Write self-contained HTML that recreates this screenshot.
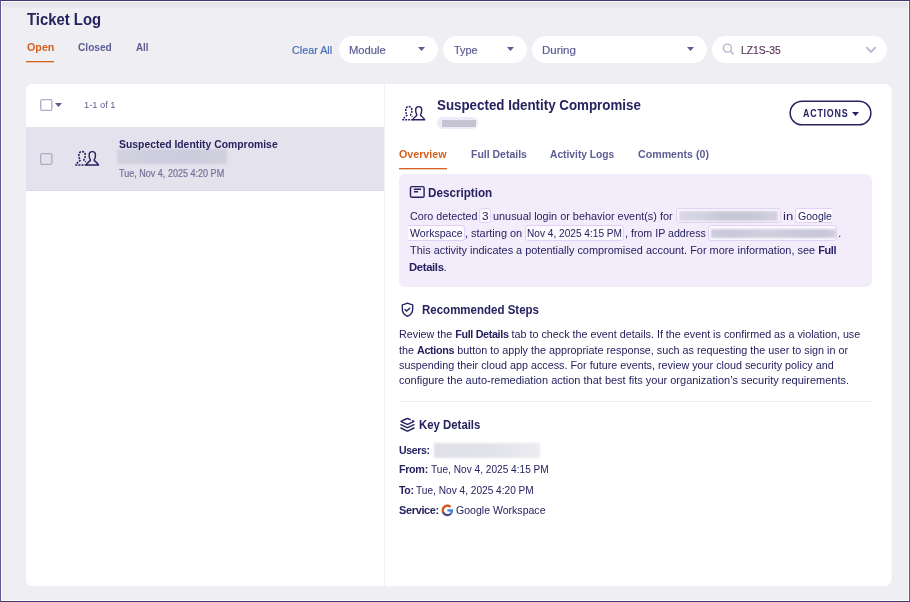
<!DOCTYPE html>
<html lang="en">
<head>
<meta charset="utf-8">
<title>Ticket Log</title>
<style>
html,body{margin:0;padding:0}
body{width:910px;height:602px;position:relative;overflow:hidden;background:#eeeef3;font-family:"Liberation Sans",sans-serif;}
.abs,.t,svg{position:absolute}
.t{white-space:nowrap;display:block;transform-origin:0 50%}
.t b{font-weight:700;letter-spacing:-0.35px}
.frame{left:0;top:0;width:908px;height:600px;border:1px solid;border-color:#3e3973 #5d5991;box-shadow:inset 0 0 0 1px #fdfdff;z-index:50}
.topband{left:2px;top:2px;width:906px;height:7px;background:linear-gradient(#e3e3e9,#e6e6ec 60%,#eeeef3)}
.panel{left:26px;top:84px;width:865px;height:502px;background:#fff;border-radius:6px}
.vdiv{left:384px;top:84px;width:1px;height:502px;background:#f1f1f7}
.row{left:26px;top:127px;width:358px;height:64px;background:#e4e2ec;border-bottom:1px solid #d9d8e6;box-sizing:border-box}
.pill{top:36px;height:27px;border-radius:13.5px;background:#fff}
.uline{height:2px;background:linear-gradient(#d5601f 50%,rgba(213,96,31,.32) 50%)}
.desc{left:399px;top:174px;width:473px;height:113px;border-radius:6px;background:#f3ecfb}
.chip{height:13.5px;background:#fcfaff;border:1px solid #e1d2f5;border-radius:3px}
.hdash{left:399px;top:401px;width:473px;height:1px;background:repeating-linear-gradient(90deg,#e8e8ef 0 2px,#f8f8fb 2px 3px)}
.blur{filter:blur(0.8px)}
</style>
</head>
<body>
<div class="abs topband"></div>
<div class="abs panel"></div>
<div class="abs" style="left:891px;top:87px;width:1px;height:496px;background:rgba(255,255,255,.5)"></div>
<div class="abs row"></div>
<div class="abs vdiv"></div>

<!-- tabs underline -->
<div class="abs uline" style="left:26px;top:61px;width:28px"></div>

<!-- filter pills -->
<div class="abs pill" style="left:338.5px;width:99.5px"></div>
<div class="abs pill" style="left:443px;width:84px"></div>
<div class="abs pill" style="left:532px;width:175px"></div>
<div class="abs pill" style="left:712px;width:175px"></div>
<!-- carets -->
<svg style="left:418px;top:47px" width="7" height="4" viewBox="0 0 7 4"><path d="M0 0h7L3.5 4z" fill="#5d5c93"/></svg>
<svg style="left:506.6px;top:47px" width="7" height="4" viewBox="0 0 7 4"><path d="M0 0h7L3.5 4z" fill="#5d5c93"/></svg>
<svg style="left:687px;top:47px" width="7" height="4" viewBox="0 0 7 4"><path d="M0 0h7L3.5 4z" fill="#5d5c93"/></svg>
<!-- search icon -->
<svg style="left:722px;top:43px" width="14" height="14" viewBox="0 0 14 14"><circle cx="5.400" cy="5.150" r="4" fill="none" stroke="#b7b3cf" stroke-width="1.35"/><path d="M8.400 8.150L11.300 11" stroke="#b7b3cf" stroke-width="1.5" stroke-linecap="round"/></svg>
<!-- chevron -->
<svg style="left:865px;top:46px" width="12" height="8" viewBox="0 0 12 8"><path d="M1.300 1.200l4.700 4.700 4.700-4.700" fill="none" stroke="#b9b6cf" stroke-width="1.8" stroke-linecap="butt" stroke-linejoin="miter"/></svg>

<!-- list header -->
<svg style="left:39.3px;top:97.9px" width="15" height="15" viewBox="0 0 15 15"><rect x="1.65" y="1.65" width="11.2" height="10.800" rx="1.600" fill="none" stroke="#aeacc9" stroke-width="1.3"/></svg>
<svg style="left:55px;top:103px" width="7" height="4" viewBox="0 0 7 4"><path d="M0 0h7L3.500 4z" fill="#5d5c93"/></svg>
<!-- row -->
<svg style="left:39.3px;top:151.5px" width="15" height="15" viewBox="0 0 15 15"><rect x="1.65" y="1.65" width="11.2" height="10.800" rx="1.600" fill="none" stroke="#aeacc9" stroke-width="1.3"/></svg>
<svg style="left:74px;top:150.100px" width="25.85" height="16.3" viewBox="0 0 25 16" preserveAspectRatio="none"><g fill="none" stroke="#262260" stroke-width="1.4" stroke-linejoin="round" stroke-linecap="butt">
<path d="M15.80 9.40C14.80 8.30 14.65 6.50 14.65 4.80C14.65 2.90 15.90 1.60 17.70 1.60C19.50 1.60 20.75 2.90 20.75 4.80C20.75 6.50 20.60 8.30 19.60 9.40L19.60 10.30C20.30 11.20 22.50 12.20 23.70 14.80L11.70 14.80C12.90 12.20 15.10 11.20 15.80 10.30Z"/>
<path d="M12.20 14.80L1.80 14.80C3.00 12.20 5.20 11.20 5.90 10.30L5.90 9.40C4.90 8.30 4.75 6.50 4.75 4.80C4.75 2.90 6.00 1.60 7.80 1.60C9.60 1.60 10.85 2.90 10.85 4.80C10.85 6.50 10.70 8.30 9.70 9.40L9.70 10.30C10.10 10.80 10.70 11.20 11.40 11.60" stroke-width="1.5" stroke-dasharray="2 1"/>
</g></svg>
<div class="abs blur" style="left:117px;top:148.800px;width:109.800px;height:14.800px;background:linear-gradient(90deg,#d3d2e0,#cfcede 30%,#cdccdc 70%,#d2d1df)"></div>

<!-- detail header -->

<svg style="left:401px;top:105px" width="25" height="16" viewBox="0 0 25 16"><g fill="none" stroke="#262260" stroke-width="1.4" stroke-linejoin="round" stroke-linecap="butt">
<path d="M15.80 9.40C14.80 8.30 14.65 6.50 14.65 4.80C14.65 2.90 15.90 1.60 17.70 1.60C19.50 1.60 20.75 2.90 20.75 4.80C20.75 6.50 20.60 8.30 19.60 9.40L19.60 10.30C20.30 11.20 22.50 12.20 23.70 14.80L11.70 14.80C12.90 12.20 15.10 11.20 15.80 10.30Z"/>
<path d="M12.20 14.80L1.80 14.80C3.00 12.20 5.20 11.20 5.90 10.30L5.90 9.40C4.90 8.30 4.75 6.50 4.75 4.80C4.75 2.90 6.00 1.60 7.80 1.60C9.60 1.60 10.85 2.90 10.85 4.80C10.85 6.50 10.70 8.30 9.70 9.40L9.70 10.30C10.10 10.80 10.70 11.20 11.40 11.60" stroke-width="1.5" stroke-dasharray="2 1"/>
</g></svg>
<div class="abs" style="left:436.600px;top:117px;width:41.200px;height:11.800px;border-radius:6px;background:#eeeaf9"></div>
<div class="abs" style="left:442px;top:120px;width:34px;height:7px;background:#c5c4d3"></div>
<svg style="left:788px;top:99px" width="86" height="29" viewBox="0 0 86 29"><rect x="2.150" y="2.150" width="80.700" height="23.700" rx="11.850" fill="#fff" stroke="#262260" stroke-width="1.5"/></svg>
<svg style="left:851.6px;top:112px" width="7" height="4" viewBox="0 0 7 4"><path d="M0 0h7L3.5 4z" fill="#262260"/></svg>
<div class="abs uline" style="left:399px;top:168px;width:48px"></div>

<!-- description -->
<div class="abs desc"></div>
<svg style="left:409.200px;top:185px" width="17" height="14" viewBox="0 0 17 14"><rect x="1.500" y="1.600" width="13.600" height="10.600" rx="1.300" fill="none" stroke="#262260" stroke-width="1.45"/><path d="M4.900 4.200h7.200M4.900 6.800h4.200" stroke="#262260" stroke-width="1.5"/></svg>
<div class="abs chip" style="left:479.4px;top:207.6px;width:9.4px"></div>
<div class="abs chip" style="left:675.6px;top:207.6px;width:103.4px"></div>
<div class="abs chip" style="left:794.7px;top:207.6px;width:36.800px;border-right:0;border-radius:3px 0 0 3px"></div>
<div class="abs chip" style="left:408px;top:225px;width:55.6px;border-left:0;border-radius:0 3px 3px 0"></div>
<div class="abs chip" style="left:524.7px;top:225px;width:97.2px"></div>
<div class="abs chip" style="left:707.9px;top:225px;width:127.2px"></div>
<div class="abs blur" style="left:679px;top:211px;width:99px;height:9.5px;background:linear-gradient(90deg,#d9d8e5,#d3d2e0 25%,#c7c6d7 45%,#c9c8d9 75%,#d3d2e0)"></div>
<div class="abs blur" style="left:710.5px;top:228.700px;width:125.300px;height:9.5px;background:linear-gradient(90deg,#cdccdc,#c9c8d9 15%,#d1d0de 45%,#cac9da 70%,#c8c7d8 90%,#d2d1df)"></div>

<!-- recommended steps -->
<svg style="left:400px;top:301px" width="15" height="17" viewBox="0 0 15 17"><path d="M7.500 2.200Q10.200 3.500 12.700 3.900L12.700 8.200C12.700 11.600 10.300 14 7.500 15.300C4.700 14 2.300 11.600 2.300 8.200L2.300 3.900Q4.800 3.500 7.500 2.200Z" fill="none" stroke="#262260" stroke-width="1.35" stroke-linejoin="round"/><path d="M4.900 8.600L6.500 10.100L9.800 7.200" fill="none" stroke="#262260" stroke-width="1.4" stroke-linecap="round" stroke-linejoin="round"/></svg>
<div class="abs hdash"></div>

<!-- key details -->
<svg style="left:399px;top:416px" width="17" height="18" viewBox="0 0 17 18" fill="none" stroke="#262260" stroke-width="1.4" stroke-linecap="round" stroke-linejoin="round"><path d="M11.200 3.700L9.200 2.750Q8.400 2.400 7.600 2.750L2.300 5.100Q1.700 5.400 2.300 5.700L7.600 8.050Q8.400 8.400 9.200 8.050L14.500 5.700Q15.100 5.400 14.500 5.100L13.700 4.750"/><path d="M1.900 8.700L7.600 11.300Q8.400 11.650 9.200 11.300L15 8.700"/><path d="M1.900 12L7.600 14.800Q8.400 15.150 9.200 14.800L15 12"/></svg>
<div class="abs blur" style="left:434px;top:443px;width:105.500px;height:15px;background:linear-gradient(90deg,#e0e0e9,#e3e3eb 60%,#ececf2)"></div>
<!-- google G -->
<svg style="left:441.100px;top:503.800px" width="12.8" height="12.8" viewBox="0 0 48 48"><path fill="#4a80d6" d="M45.100 24.500c0-1.600-.1-3.100-.4-4.500H24v8.500h11.800c-.5 2.800-2.100 5.100-4.400 6.700v5.500h7.100c4.200-3.800 6.600-9.500 6.600-16.200z"/><path fill="#4b4a88" d="M24 46c5.900 0 10.900-2 14.500-5.300l-7.100-5.500c-2 1.300-4.500 2.100-7.400 2.100-5.700 0-10.500-3.800-12.300-9H4.400v5.700C8 41.100 15.400 46 24 46z"/><path fill="#d9581c" d="M11.700 28.300c-.4-1.300-.7-2.800-.7-4.300s.3-2.900.7-4.300V14H4.400C2.900 17 2 20.400 2 24s.9 7 2.400 10l7.300-5.700z"/><path fill="#d5500f" d="M24 10.700c3.200 0 6.100 1.100 8.400 3.300l6.300-6.300C34.900 4.200 29.900 2 24 2 15.400 2 8 6.900 4.400 14l7.300 5.700c1.800-5.200 6.600-9 12.300-9z"/></svg>

<span class="t" style="left:27.00px;top:8.9px;font-size:16.5px;line-height:21px;font-weight:700;color:#262260;transform:scaleX(0.9018);">Ticket Log</span>
<span class="t" style="left:27.00px;top:39.9px;font-size:11.2px;line-height:15px;font-weight:700;color:#d5601f;transform:scaleX(0.9584);">Open</span>
<span class="t" style="left:78.00px;top:39.9px;font-size:11.2px;line-height:15px;font-weight:700;color:#5d5c93;transform:scaleX(0.9059);">Closed</span>
<span class="t" style="left:136.00px;top:39.9px;font-size:11.2px;line-height:15px;font-weight:700;color:#5d5c93;transform:scaleX(0.8816);">All</span>
<span class="t" style="left:292.00px;top:42.5px;font-size:11.2px;line-height:15px;font-weight:400;color:#4a6cb8;transform:scaleX(0.9631);-webkit-text-stroke:0.2px currentColor;">Clear All</span>
<span class="t" style="left:349.00px;top:42.5px;font-size:11.2px;line-height:15px;font-weight:400;color:#5d5c93;transform:scaleX(1.0036);-webkit-text-stroke:0.2px currentColor;">Module</span>
<span class="t" style="left:454.00px;top:42.5px;font-size:11.2px;line-height:15px;font-weight:400;color:#5d5c93;transform:scaleX(0.9737);-webkit-text-stroke:0.2px currentColor;">Type</span>
<span class="t" style="left:542.00px;top:42.5px;font-size:11.2px;line-height:15px;font-weight:400;color:#5d5c93;transform:scaleX(1.0298);-webkit-text-stroke:0.2px currentColor;">During</span>
<span class="t" style="left:741.00px;top:42.5px;font-size:11.2px;line-height:15px;font-weight:400;color:#5b3a5e;transform:scaleX(0.9239);-webkit-text-stroke:0.2px currentColor;">LZ1S-35</span>
<span class="t" style="left:84.00px;top:99.4px;font-size:9.3px;line-height:12px;font-weight:400;color:#5d5c93;transform:scaleX(0.9986);">1-1 of 1</span>
<span class="t" style="left:119.00px;top:136.5px;font-size:11.8px;line-height:15px;font-weight:700;color:#262260;transform:scaleX(0.8801);">Suspected Identity Compromise</span>
<span class="t" style="left:119.00px;top:167.0px;font-size:10.2px;line-height:13px;font-weight:400;color:#737198;transform:scaleX(0.8872);-webkit-text-stroke:0.2px currentColor;">Tue, Nov 4, 2025 4:20 PM</span>
<span class="t" style="left:437.00px;top:95.5px;font-size:14.8px;line-height:19px;font-weight:700;color:#262260;transform:scaleX(0.9016);">Suspected Identity Compromise</span>
<span class="t" style="left:399.00px;top:146.9px;font-size:11.2px;line-height:15px;font-weight:700;color:#d5601f;transform:scaleX(0.9540);">Overview</span>
<span class="t" style="left:471.00px;top:146.9px;font-size:11.2px;line-height:15px;font-weight:700;color:#5d5c93;transform:scaleX(0.9361);">Full Details</span>
<span class="t" style="left:550.00px;top:146.9px;font-size:11.2px;line-height:15px;font-weight:700;color:#5d5c93;transform:scaleX(0.9153);">Activity Logs</span>
<span class="t" style="left:638.00px;top:146.9px;font-size:11.2px;line-height:15px;font-weight:700;color:#5d5c93;transform:scaleX(0.9515);">Comments (0)</span>
<span class="t" style="left:803.00px;top:107.0px;font-size:10px;line-height:13px;font-weight:700;color:#262260;transform:scaleX(0.8861);letter-spacing:0.9px;">ACTIONS</span>
<span class="t" style="left:428.00px;top:183.8px;font-size:13px;line-height:17px;font-weight:700;color:#262260;transform:scaleX(0.8979);">Description</span>
<span class="t" style="left:410.00px;top:208.9px;font-size:11.4px;line-height:15px;font-weight:400;color:#262260;transform:scaleX(0.9436);">Coro detected</span>
<span class="t" style="left:482.00px;top:208.9px;font-size:11.4px;line-height:15px;font-weight:400;color:#262260;transform:scaleX(1.0313);">3</span>
<span class="t" style="left:493.00px;top:208.9px;font-size:11.4px;line-height:15px;font-weight:400;color:#262260;transform:scaleX(0.9552);">unusual login or behavior event(s) for</span>
<span class="t" style="left:783.00px;top:208.9px;font-size:11.4px;line-height:15px;font-weight:400;color:#262260;transform:scaleX(1.1504);">in</span>
<span class="t" style="left:798.00px;top:208.9px;font-size:11.4px;line-height:15px;font-weight:400;color:#262260;transform:scaleX(0.9242);">Google</span>
<span class="t" style="left:410.00px;top:225.9px;font-size:11.4px;line-height:15px;font-weight:400;color:#262260;transform:scaleX(0.9267);">Workspace</span>
<span class="t" style="left:465.00px;top:225.9px;font-size:11.4px;line-height:15px;font-weight:400;color:#262260;transform:scaleX(0.9609);">, starting on</span>
<span class="t" style="left:527.00px;top:225.9px;font-size:11.4px;line-height:15px;font-weight:400;color:#262260;transform:scaleX(0.8880);">Nov 4, 2025 4:15 PM</span>
<span class="t" style="left:625.00px;top:225.9px;font-size:11.4px;line-height:15px;font-weight:400;color:#262260;transform:scaleX(0.9351);">, from IP address</span>
<span class="t" style="left:838.00px;top:225.9px;font-size:11.4px;line-height:15px;font-weight:400;color:#262260;transform:scaleX(1.0351);">.</span>
<span class="t" style="left:410.00px;top:242.9px;font-size:11.4px;line-height:15px;font-weight:400;color:#262260;transform:scaleX(0.9579);">This activity indicates a potentially compromised account. For more information, see <b>Full</b></span>
<span class="t" style="left:409.00px;top:259.9px;font-size:11.4px;line-height:15px;font-weight:400;color:#262260;transform:scaleX(0.9903);"><b>Details</b>.</span>
<span class="t" style="left:422.00px;top:301.6px;font-size:12.6px;line-height:16px;font-weight:700;color:#262260;transform:scaleX(0.9135);">Recommended Steps</span>
<span class="t" style="left:399.00px;top:326.9px;font-size:11.2px;line-height:15px;font-weight:400;color:#262260;transform:scaleX(0.9617);">Review the <b>Full Details</b> tab to check the event details. If the event is confirmed as a violation, use</span>
<span class="t" style="left:399.00px;top:342.9px;font-size:11.2px;line-height:15px;font-weight:400;color:#262260;transform:scaleX(0.9640);">the <b>Actions</b> button to apply the appropriate response, such as requesting the user to sign in or</span>
<span class="t" style="left:399.00px;top:357.9px;font-size:11.2px;line-height:15px;font-weight:400;color:#262260;transform:scaleX(0.9641);">suspending their cloud app access. For future events, review your cloud security policy and</span>
<span class="t" style="left:399.00px;top:372.9px;font-size:11.2px;line-height:15px;font-weight:400;color:#262260;transform:scaleX(0.9824);">configure the auto-remediation action that best fits your organization’s security requirements.</span>
<span class="t" style="left:419.00px;top:417.0px;font-size:12.6px;line-height:16px;font-weight:700;color:#262260;transform:scaleX(0.9037);">Key Details</span>
<span class="t" style="left:399.00px;top:442.5px;font-size:11.2px;line-height:15px;font-weight:400;color:#262260;transform:scaleX(0.9389);"><b>Users:</b></span>
<span class="t" style="left:399.00px;top:461.5px;font-size:11.2px;line-height:15px;font-weight:400;color:#262260;transform:scaleX(0.9648);"><b>From:</b></span>
<span class="t" style="left:431.00px;top:461.5px;font-size:11.2px;line-height:15px;font-weight:400;color:#262260;transform:scaleX(0.9047);">Tue, Nov 4, 2025 4:15 PM</span>
<span class="t" style="left:399.00px;top:482.9px;font-size:11.2px;line-height:15px;font-weight:400;color:#262260;transform:scaleX(0.9458);"><b>To:</b></span>
<span class="t" style="left:416.00px;top:482.9px;font-size:11.2px;line-height:15px;font-weight:400;color:#262260;transform:scaleX(0.9047);">Tue, Nov 4, 2025 4:20 PM</span>
<span class="t" style="left:399.00px;top:502.5px;font-size:11.2px;line-height:15px;font-weight:400;color:#262260;transform:scaleX(0.9790);"><b>Service:</b></span>
<span class="t" style="left:456.00px;top:502.5px;font-size:11.2px;line-height:15px;font-weight:400;color:#262260;transform:scaleX(0.9429);">Google Workspace</span>
<div class="abs frame"></div>
</body>
</html>
